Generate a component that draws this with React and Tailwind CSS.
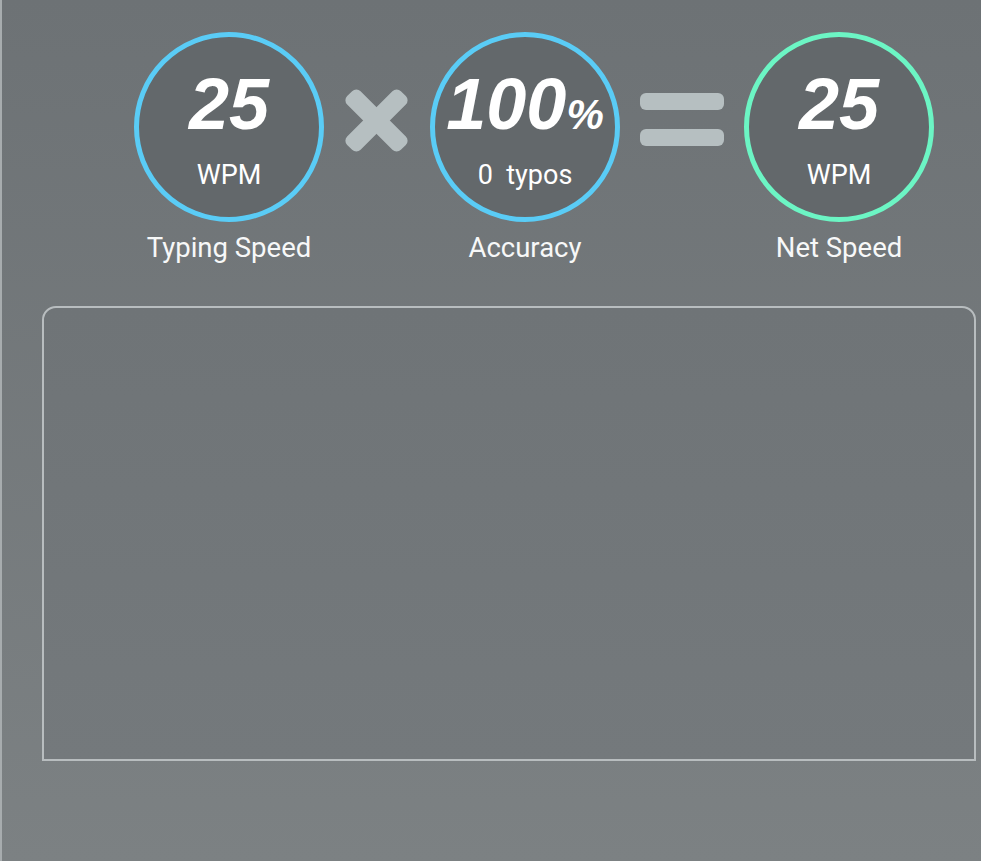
import React from "react";

const num = { fontFamily: '"Liberation Sans", Arial, sans-serif' };
const rob = { fontFamily: 'Roboto, "Liberation Sans", sans-serif' };

function Stat({ color, children, sub, label }) {
  return (
    <div className="flex w-[190px] flex-col items-center">
      <div
        className={`flex h-[190px] w-[190px] flex-col items-center rounded-full border-[5px] bg-[#63686b] pt-[31px] ${color}`}
      >
        {children}
        <div className="mt-[23px] text-[27px] leading-none text-white" style={rob}>
          {sub}
        </div>
      </div>
      <div className="mt-[9px] whitespace-nowrap text-[27.5px] leading-[1.2] text-[#f7f8f8]" style={rob}>
        {label}
      </div>
    </div>
  );
}

function Big({ children, pct }) {
  return (
    <div
      className="flex h-[71px] items-baseline text-[72px] font-bold italic leading-none text-white"
      style={num}
    >
      {children}
      {pct && <span className="text-[42px]">%</span>}
    </div>
  );
}

export default function App() {
  return (
    <div className="min-h-[861px] border-l-2 border-[#a7acae] bg-gradient-to-b from-[#6d7275] to-[#7c8183]">
      <div className="flex items-start gap-5 pl-[132px] pt-[32px]">
        <Stat color="border-[#5accf6]" sub="WPM" label="Typing Speed">
          <Big>25</Big>
        </Stat>
        <div className="-ml-px mt-[55px] h-[67px] w-[67px]">
          <svg width="67" height="67" viewBox="0 0 67 67" overflow="visible">
            <g fill="#b6bfc1">
              <rect x="-4.5" y="24" width="76" height="19" rx="6" transform="rotate(45 33.5 33.5)" />
              <rect x="-4.5" y="24" width="76" height="19" rx="6" transform="rotate(-45 33.5 33.5)" />
            </g>
          </svg>
        </div>
        <Stat color="border-[#5accf6]" sub={<span>0&nbsp; typos</span>} label="Accuracy">
          <Big pct>100</Big>
        </Stat>
        <div className="mt-[61px] flex flex-col gap-[19px]">
          <div className="h-[17px] w-[84px] rounded-[6px] bg-[#b6bfc1]" />
          <div className="h-[17px] w-[84px] rounded-[6px] bg-[#b6bfc1]" />
        </div>
        <Stat color="border-[#6cf5c4]" sub="WPM" label="Net Speed">
          <Big>25</Big>
        </Stat>
      </div>
      <div className="ml-[40px] mt-[42px] h-[455px] w-[934px] rounded-t-[14px] border-2 border-[#b8bdbf] bg-gradient-to-b from-[#6f7477] to-[#74797c]" />
    </div>
  );
}
